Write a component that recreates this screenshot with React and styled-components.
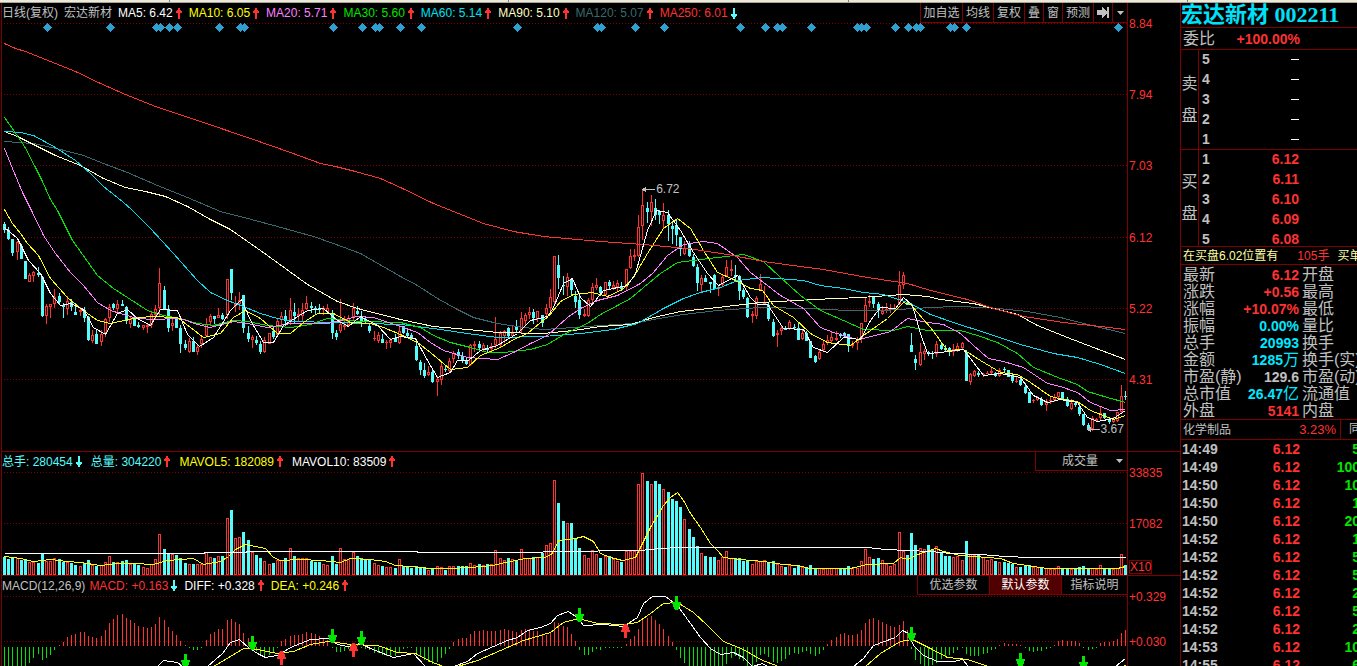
import React from 'react'
import styled, { createGlobalStyle } from 'styled-components'

const RED = '#ff3232'
const CYAN = '#54fcfc'
const LINE = '#800000'
const GRAY = '#c0c0c0'
const GREEN = '#00e600'
const YELLOW = '#ffff00'

// one entry per day: u(p) / d(own), then high, body top, body bottom, low
const candles = `
d222,224,230,233 d227,230,239,240 d239,239,253,256 u241,242,252,260 d244,246,259,259 d261,261,279,279 u273,275,282,282 u271,272,276,282
d267,273,275,277 d276,277,316,317 u304,306,316,324 u304,304,307,318 u289,297,304,308 d293,296,302,304 d303,305,307,318 u296,301,309,315
d299,302,307,311 d303,312,315,315 u307,310,312,316 d307,310,318,322 d316,317,340,341 u330,335,341,343 d330,334,344,344 u330,334,342,346
u318,319,333,337 u304,307,318,322 d303,304,308,310 u300,304,309,312 d300,304,306,306 d306,307,321,324 u316,319,324,328 d316,317,326,326
d322,325,327,328 u325,325,328,330 u323,325,327,333 u312,314,325,328 u305,309,315,320 u268,283,308,316 d286,290,309,310 d305,309,328,332
u318,323,326,331 d317,318,328,328 d325,328,344,353 d340,344,348,350 u338,341,352,353 d337,341,352,352 u344,347,352,355 u336,339,344,348
u318,324,336,336 u314,316,322,326 d316,316,319,324 u308,315,318,318 d313,315,319,320 u279,279,315,319 d269,269,293,300 u296,304,306,312
u292,300,304,310 d295,295,328,333 d326,333,339,342 u335,337,340,348 d336,340,343,345 d341,344,352,354 u337,340,352,353 u333,333,344,344
d327,331,337,339 u319,321,335,336 u312,316,320,325 d310,316,321,326 u298,310,320,325 d303,312,316,324 u308,314,316,321 u303,310,316,322
u296,303,309,310 d302,306,308,313 d306,308,310,314 d304,308,310,313 u306,308,310,315 u304,308,312,314 d310,313,333,339 d330,333,337,340
u299,324,331,333 u316,325,327,330 u315,318,325,326 u303,308,317,320 d306,311,314,315 d311,316,322,327 d317,319,322,323 d323,326,331,333
u331,338,339,341 u332,335,341,343 d334,339,343,343 u340,342,343,349 u338,340,343,348 d334,338,342,342 u325,331,343,344 d326,326,333,334
d329,333,336,337 d333,335,339,340 d340,346,360,361 d360,362,370,375 d363,370,376,378 u366,372,375,376 d368,372,382,383 u376,379,382,396
u363,366,380,385 d365,369,370,372 u358,361,371,372 u351,353,359,363 d349,352,356,359 d352,356,360,363 d357,360,364,365 u344,345,365,366
u341,344,346,352 d341,344,348,350 u343,345,349,351 d345,348,350,352 u343,346,349,351 u317,339,345,348 u331,333,345,347 u330,331,336,343
d327,328,336,337 u326,333,336,336 d320,326,330,333 u312,318,330,333 u313,315,321,326 u307,312,315,319 d309,312,318,324 u311,311,319,322
d315,315,323,327 u304,308,314,317 u289,297,308,313 u256,256,302,306 d255,265,278,289 d276,285,286,295 u273,277,287,296 d278,279,290,295
d291,296,302,308 d295,300,315,319 u309,314,316,317 u298,300,316,317 u283,287,300,303 u278,285,288,290 d286,287,293,296 u282,282,295,296
d280,282,286,290 u281,285,288,290 u280,283,287,291 d282,287,289,291 u269,269,287,290 u249,256,268,269 u249,255,257,261 u215,227,256,257
u189,205,226,240 d202,208,212,223 u195,202,212,226 d199,208,215,220 d210,211,215,224 u203,215,221,228 d210,215,224,241 d223,226,229,244
d220,225,235,246 d237,237,249,256 u241,248,254,255 d241,243,256,257 d254,257,266,267 d264,267,283,291 u275,278,285,292 d275,278,282,282
d282,282,284,293 d274,275,289,290 u286,287,289,296 u275,277,285,286 u260,267,276,276 u260,269,271,276 d265,275,277,280 d275,276,291,300
d288,290,297,299 d297,298,317,318 u311,314,316,323 u296,298,316,319 u274,284,290,291 u286,302,304,305 d303,305,319,321 d319,322,336,337
u330,333,335,347 u326,328,331,335 d326,328,330,330 u320,322,329,330 d324,327,328,330 d323,328,340,340 u330,333,339,340 d331,333,341,341
d341,341,358,358 d355,356,362,363 u349,352,359,360 u341,344,350,351 u335,340,343,345 u331,337,341,343 u331,338,340,341 d333,335,336,338
d332,333,336,337 d334,334,345,352 u341,344,346,348 u337,339,343,350 u323,323,339,343 u298,305,322,322 u295,301,303,307 d296,296,304,308
d302,304,310,318 u306,311,314,315 u303,309,310,313 u304,309,310,313 u304,308,309,311 u271,285,304,305 u272,275,285,289 d304,304,305,305
d333,345,352,352 d355,359,363,370 u343,352,365,366 u349,351,354,360 d351,352,354,356 d351,353,354,359 u341,344,354,357 d343,345,349,350
d345,348,350,351 d347,348,351,356 u344,349,352,356 u343,346,350,352 u342,343,348,350 d350,352,381,381 u373,374,382,385 u370,371,376,377
d371,373,375,377 u373,374,375,377 u371,373,374,374 u367,371,373,374 d372,373,376,377 u368,370,376,377 d367,369,370,372 d370,370,377,377
d373,375,381,383 u376,381,382,383 d377,380,385,386 d383,387,393,394 d392,392,403,403 u399,400,401,403 u396,397,400,401 d397,399,405,406
u399,401,405,411 u397,400,401,404 u394,397,400,402 u392,392,397,399 d392,392,399,400 d397,399,406,407 u399,403,409,410 d402,403,405,407
d402,407,414,416 d414,414,425,426 d423,425,429,430 u416,418,429,431 u418,419,421,422 u406,413,418,420 d413,413,418,419 d418,419,422,424
u417,419,422,423 u412,412,421,422 u385,396,412,414 d391,396,397,400
`
  .trim()
  .split(/\s+/)
  .map((c) => {
    const [high, top, bottom, low] = c.slice(1).split(',').map(Number)
    return { up: c[0] === 'u', high, top, bottom, low }
  })

const volumes = [
  18, 16, 18, 17, 15, 15, 13, 13, 12, 21, 14, 14, 17, 16, 13, 13, 12, 10, 9, 12, 15, 10, 9, 10, 13, 19, 13, 13, 14, 15, 11, 11, 10, 8, 7,
  11, 16, 41, 26, 21, 21, 20, 17, 12, 11, 11, 11, 11, 23, 18, 17, 19, 19, 57, 65, 37, 38, 43, 35, 23, 20, 17, 14, 11, 12, 15, 15, 17, 27,
  19, 17, 17, 17, 14, 13, 13, 11, 10, 19, 11, 27, 16, 16, 23, 19, 17, 16, 16, 12, 10, 9, 8, 8, 7, 16, 9, 8, 7, 9, 8, 7, 5, 7, 9, 8, 5, 9,
  9, 9, 9, 9, 12, 10, 11, 10, 11, 11, 25, 17, 15, 17, 16, 15, 26, 17, 17, 18, 18, 22, 30, 32, 95, 72, 54, 52, 52, 37, 27, 20, 17, 25, 21,
  17, 19, 19, 16, 14, 13, 24, 24, 24, 91, 102, 94, 91, 94, 91, 86, 83, 76, 74, 68, 56, 46, 38, 29, 22, 19, 18, 18, 15, 18, 24, 17, 17, 17,
  14, 14, 11, 14, 14, 15, 13, 14, 11, 9, 8, 10, 7, 9, 8, 7, 10, 7, 7, 6, 7, 7, 7, 7, 6, 9, 7, 7, 14, 26, 18, 16, 17, 15, 11, 9, 11, 43, 24,
  20, 42, 30, 27, 26, 30, 26, 29, 23, 19, 19, 18, 19, 15, 34, 21, 20, 20, 18, 15, 16, 14, 13, 13, 12, 11, 8, 8, 9, 10, 8, 8, 7, 7, 6, 6, 9,
  7, 7, 6, 6, 8, 9, 6, 7, 6, 10, 6, 6, 6, 7, 21, 10,
]

const macd = [
  -20, -20, -20, -20, -20, -19, -16, -11, -7, -13, -11, -8, -3, 1, 4, 9, 11, 12, 14, 14, 10, 9, 8, 10, 16, 23, 27, 31, 32, 28, 26, 23, 20,
  19, 18, 19, 22, 29, 26, 19, 15, 11, 5, 1, -1, -3, -3, -1, 6, 12, 14, 17, 17, 26, 27, 24, 22, 13, 8, -1, -4, -9, -9, -8, -5, -1, 5, 7, 10,
  11, 11, 12, 14, 13, 12, 10, 7, 6, -1, -5, -5, -4, -2, 1, 2, -1, -2, -3, -6, -6, -8, -9, -9, -9, -5, -2, -1, -1, -7, -10, -13, -15, -17,
  -15, -11, -7, -2, 4, 7, 8, 8, 12, 15, 15, 16, 15, 15, 15, 16, 17, 16, 15, 14, 16, 17, 17, 15, 15, 11, 11, 13, 24, 23, 20, 19, 12, 5, -3,
  -8, -8, -5, -2, -3, -1, -1, -1, -1, -1, 2, 7, 10, 17, 27, 28, 30, 26, 22, 17, 10, 4, -3, -11, -16, -20, -20, -20, -20, -20, -20, -20, -20,
  -20, -17, -11, -9, -12, -14, -19, -20, -15, -8, -7, -10, -15, -16, -14, -12, -8, -6, -7, -5, -4, -7, -9, -7, -3, 2, 6, 9, 12, 13, 11, 11,
  12, 16, 23, 27, 28, 26, 24, 22, 20, 19, 21, 25, 16, -2, -13, -17, -19, -20, -18, -16, -12, -10, -8, -6, -3, -1, -7, -9, -9, -9, -7, -6,
  -3, -2, 1, 3, 2, 2, 2, 1, -1, -4, -5, -4, -4, -2, -1, 1, 5, 6, 5, 5, 5, 3, -1, -3, -2, -1, 3, 4, 4, 5, 7, 13, 16,
]

const priceLines = [
  {
    color: '#3a6a6e',
    points:
      '4,141 33,143 60,149 83,155 103,163 127,172 157,185 187,197 220,211 251,219 277,226 313,236 333,243 360,253 400,276 417,285 437,298 457,309 473,317 497,323 523,327 543,329 573,327 600,325 633,323 653,319 683,314 717,310 760,307 810,308 847,310 883,310 913,308 953,306 987,307 1027,311 1060,317 1087,324 1125,333',
  },
  {
    color: '#ffffc0',
    points:
      '4,131 17,136 33,144 55,155 80,165 103,178 125,187 145,191 165,196 187,206 210,219 230,229 267,255 307,284 337,301 357,308 400,319 433,326 467,329 497,332 543,333 573,330 600,326 630,324 653,317 680,311 717,307 760,302 813,299 860,297 903,294 927,296 940,299 973,303 993,308 1017,314 1037,325 1067,337 1093,347 1125,359',
  },
  {
    color: '#00e0f0',
    points:
      '4,131 20,132 33,135 55,147 75,160 90,173 103,186 122,201 132,210 150,228 173,253 197,280 210,292 227,300 243,306 260,313 277,318 293,321 333,322 400,324 433,328 467,333 497,337 543,336 580,333 613,329 637,323 663,308 683,298 700,292 720,287 737,280 763,277 803,280 820,285 843,288 863,292 883,294 910,303 930,314 953,322 987,333 1020,344 1053,353 1077,357 1100,364 1125,373',
  },
  {
    color: GREEN,
    points:
      '4,117 14,131 24,146 35,167 42,181 50,199 57,210 72,240 97,275 113,288 127,297 147,310 163,315 180,318 197,323 213,325 233,320 247,321 267,325 290,327 310,324 327,318 347,320 363,321 400,322 420,327 433,335 450,342 470,347 487,352 503,352 530,349 547,344 567,332 587,323 600,314 617,305 630,298 643,287 660,273 677,262 700,259 717,257 743,254 763,261 780,277 800,295 820,310 843,320 863,329 893,330 907,326 927,330 960,330 977,335 997,342 1017,353 1033,367 1060,378 1077,384 1087,391 1107,397 1125,402',
  },
  {
    color: '#ff80ff',
    points:
      '4,148 12,168 22,192 31,210 43,235 55,253 70,272 83,285 97,302 110,310 133,317 150,319 180,318 197,324 210,327 233,321 247,323 267,327 290,323 327,323 357,316 373,317 400,326 417,332 430,342 443,350 467,357 497,359 513,352 530,343 547,335 567,317 580,308 597,300 617,295 640,283 653,272 667,255 683,244 703,241 717,243 737,257 750,272 763,282 780,295 803,308 820,327 833,332 857,339 867,337 890,331 907,318 927,322 943,324 960,333 973,345 988,358 1003,361 1023,367 1047,383 1060,386 1077,392 1090,402 1110,410 1125,409',
  },
  {
    color: YELLOW,
    points:
      '4,209 12,223 20,233 27,243 38,255 50,278 67,297 80,308 97,320 110,323 133,318 150,316 177,317 190,327 203,337 220,333 233,317 245,310 260,318 277,333 290,333 303,322 317,313 333,313 350,322 370,323 383,327 400,334 417,342 430,352 450,369 467,367 480,355 500,347 513,339 527,333 540,322 548,316 560,301 573,294 592,292 607,296 622,289 633,277 647,253 663,228 677,218 690,228 703,250 717,272 733,279 750,288 762,290 773,305 793,317 810,333 827,342 850,345 863,335 887,318 903,302 910,304 930,327 947,350 963,349 980,360 1000,372 1017,374 1030,382 1050,396 1063,399 1077,401 1090,410 1113,419 1125,415',
  },
  {
    color: RED,
    points:
      '4,43 15,48 25,51 50,61 75,71 100,83 125,94 155,106 200,121 250,138 290,152 320,163 335,166 355,171 380,178 400,187 433,203 483,223 513,231 543,236 600,241 643,244 687,248 727,254 763,261 800,266 823,269 867,277 907,283 930,290 967,299 993,308 1023,316 1063,322 1100,326 1125,329',
  },
  {
    color: '#fff',
    points:
      '4,227 17,238 28,260 40,273 50,293 60,305 70,303 83,309 93,327 105,334 117,313 127,309 137,318 150,325 160,309 177,310 187,334 199,346 213,337 230,310 241,299 250,320 263,342 273,342 283,325 307,310 323,308 337,320 348,326 360,316 377,325 390,339 400,336 415,338 427,360 437,377 450,372 457,360 468,360 480,350 497,345 517,333 530,320 547,316 553,307 563,283 572,278 580,297 590,306 603,290 627,285 635,273 647,230 656,210 667,212 680,230 693,252 707,273 718,285 737,275 750,297 757,304 767,304 783,328 803,329 813,347 827,352 843,337 860,339 870,320 880,307 895,308 903,297 912,305 920,333 927,353 940,352 963,349 983,375 1000,373 1020,377 1033,395 1047,402 1060,399 1077,402 1087,417 1097,421 1113,418 1125,410',
  },
]

const volumeLines = [
  {
    color: YELLOW,
    points:
      '4,556 20,558 33,561 50,559 67,561 80,562 100,565 117,563 133,563 153,564 167,560 193,558 203,564 220,561 228,556 235,549 245,544 255,546 265,548 273,557 280,560 300,559 320,560 340,562 350,558 370,559 385,561 395,565 410,566 430,568 450,568 470,567 492,565 505,562 525,558 545,557 552,553 558,540 575,538 583,536 593,541 600,553 610,557 622,560 635,557 640,547 650,527 663,505 670,497 677,492 683,500 690,513 700,527 710,543 717,550 723,557 740,559 763,561 783,564 797,565 810,568 850,568 867,564 893,563 900,557 907,559 920,553 935,548 943,551 960,555 987,557 1000,558 1013,563 1033,566 1047,568 1117,568 1125,566',
  },
  {
    color: '#fff',
    points:
      '4,553 203,553 205,552 245,552 247,551 415,551 419,552 540,552 545,551 595,551 600,550 640,550 660,548 680,547 867,547 885,549 930,551 950,553 980,554 1005,556 1030,557 1125,557',
  },
]

const macdLines = [
  { color: '#fff', points: '157,666 163,660 177,662 182,666' },
  {
    color: '#fff',
    points:
      '207,666 222,653 230,642 239,639 248,647 257,653 265,657 277,655 290,647 310,639 328,638 337,644 347,646 360,643 370,648 393,657 413,653 425,666',
  },
  {
    color: '#fff',
    points:
      '453,666 467,661 477,653 493,646 507,640 517,637 527,630 540,627 550,623 557,615 568,611 578,618 583,625 603,624 623,626 637,617 643,603 652,596 665,596 677,605 690,623 700,637 710,648 720,654 733,652 743,657 752,666 762,663 767,666',
  },
  {
    color: '#fff',
    points: '853,666 863,658 873,645 895,637 902,630 908,633 913,645 923,655 937,661 953,661 962,659 968,666',
  },
  { color: '#fff', points: '1115,666 1125,658' },
  {
    color: YELLOW,
    points: '213,666 230,656 243,648 257,649 277,653 293,651 310,644 328,641 350,644 377,645 397,652 415,653 430,661 443,666',
  },
  {
    color: YELLOW,
    points:
      '457,666 477,660 500,650 523,640 550,632 563,622 578,618 597,623 623,624 637,622 650,613 663,603 677,602 693,612 707,625 723,641 743,649 760,659 778,666',
  },
  { color: YELLOW, points: '865,666 880,653 900,641 912,639 930,648 947,657 967,659 988,666' },
  { color: YELLOW, points: '1123,666 1126,664' },
]

const sellSignals = [[185, 654], [252, 636], [332, 629], [361, 631], [579, 608], [676, 596], [911, 627], [1020, 653], [1083, 656]]
const buySignals = [[281, 651], [353, 643], [625, 624]]

const newsDays = [
  47, 110, 156, 160, 169, 177, 219, 240, 244, 333, 362, 375, 379, 400, 421, 517, 597, 601, 635, 664, 740, 765, 777, 782, 811, 857, 861, 866,
  895, 908, 916, 920, 950, 954, 966, 1118,
]

const maItems = [
  { text: 'MA5: 6.42', color: '#fff', up: true },
  { text: 'MA10: 6.05', color: YELLOW, up: true },
  { text: 'MA20: 5.71', color: '#ff80ff', up: true },
  { text: 'MA30: 5.60', color: GREEN, up: true },
  { text: 'MA60: 5.14', color: '#00e0f0', up: true },
  { text: 'MA90: 5.10', color: '#ffffc0', up: true },
  { text: 'MA120: 5.07', color: '#3a6a6e', up: true },
  { text: 'MA250: 6.01', color: RED, up: false },
]

const volItems = [
  { text: '总手: 280454', color: CYAN, up: false },
  { text: '总量: 304220', color: CYAN, up: true },
  { text: 'MAVOL5: 182089', color: YELLOW, up: true },
  { text: 'MAVOL10: 83509', color: '#fff', up: true },
]

const macdItems = [
  { text: 'MACD: +0.163', color: RED, up: false },
  { text: 'DIFF: +0.328', color: '#fff', up: true },
  { text: 'DEA: +0.246', color: YELLOW, up: true },
]

const asks = ['5', '4', '3', '2', '1']
const bids = [['1', '6.12'], ['2', '6.11'], ['3', '6.10'], ['4', '6.09'], ['5', '6.08']]

const stats = [
  ['最新', '6.12', '', RED, '开盘'],
  ['涨跌', '+0.56', '', RED, '最高'],
  ['涨幅', '+10.07%', '', RED, '最低'],
  ['振幅', '0.00%', '', '#00e8ff', '量比'],
  ['总手', '20993', '', '#00e8ff', '换手'],
  ['金额', '1285', '万', '#00e8ff', '换手(实)'],
  ['市盈(静)', '129.6', '', GRAY, '市盈(动)'],
  ['总市值', '26.47', '亿', '#00e8ff', '流通值'],
  ['外盘', '5141', '', RED, '内盘'],
]

const ticks = [
  ['14:49', '5'], ['14:49', '100'], ['14:50', '10'], ['14:50', '1'], ['14:50', '20'], ['14:52', '1'], ['14:52', '5'],
  ['14:52', '5'], ['14:52', '2'], ['14:52', '5'], ['14:52', '2'], ['14:53', '10'], ['14:55', '6'],
]

const dayX = (i) => Math.floor(4.4 + 4.2 * i)

function Grid({ rows }) {
  return rows.map((y) => <line key={y} x1="4" x2="1127" y1={y + 0.5} y2={y + 0.5} stroke={LINE} strokeDasharray="1 2" />)
}

function Lines({ items }) {
  return items.map((l, i) => (
    <polyline key={i} points={l.points} fill="none" stroke={l.color} strokeWidth="1" transform="translate(0.5 0.5)" />
  ))
}

function Body({ x, top, bottom, up }) {
  const h = Math.max(bottom - top, 1)
  if (!up || h < 3) return <rect x={x - 1} y={top} width="3" height={h} fill={up ? RED : CYAN} />
  return <rect x={x - 0.5} y={top + 0.5} width="2" height={h - 1} fill="#000" stroke={RED} />
}

function Trend({ up }) {
  return (
    <TrendIcon viewBox="0 0 7 11" aria-hidden="true">
      {up ? (
        <path d="M3 0h2v2h1v1h1v2H5v6H3V5H1V3h1V2h1z" fill={RED} />
      ) : (
        <path d="M3 0h2v6h2v2H6v1H5v2H3V9H2V8H1V6h2z" fill={CYAN} />
      )}
    </TrendIcon>
  )
}

function Legend({ items, gap = 7 }) {
  return items.map((m) => (
    <LegendItem key={m.text} $color={m.color} $gap={gap}>
      {m.text}
      <Trend up={m.up} />
    </LegendItem>
  ))
}

function PriceChart() {
  return (
    <Plot $height={428} viewBox="2 23 1125 428" preserveAspectRatio="none" shapeRendering="crispEdges">
      <Grid rows={[23, 94, 165, 237, 308, 379]} />
      {newsDays.map((x) => (
        <path key={x} d={`M${x} 23h1v1h1v1h1v1h1v1h1v1h-1v1h-1v1h-1v1h-1v1h-1v-1h-1v-1h-1v-1h-1v-1h-1v-1h1v-1h1v-1h1v-1h1z`} fill="#2f9fd0" />
      ))}
      {candles.map((c, i) => {
        const x = dayX(i)
        return (
          <g key={i}>
            <rect x={x} y={c.high} width="1" height={c.low - c.high} fill={c.up ? RED : CYAN} />
            <Body x={x} top={c.top} bottom={c.bottom} up={c.up} />
          </g>
        )
      })}
      <Lines items={priceLines} />
    </Plot>
  )
}

function VolumeChart() {
  return (
    <Plot $height={104} viewBox="2 471 1125 104" preserveAspectRatio="none" shapeRendering="crispEdges">
      <Grid rows={[472, 523]} />
      {volumes.map((v, i) => (
        <Body key={i} x={dayX(i)} top={575 - v} bottom={575} up={candles[i].up} />
      ))}
      <Lines items={volumeLines} />
    </Plot>
  )
}

function MacdChart() {
  return (
    <Plot $height={71} viewBox="2 595 1125 71" preserveAspectRatio="none" shapeRendering="crispEdges">
      <Grid rows={[596, 641]} />
      {macd.map((v, i) => (
        <rect key={i} x={dayX(i)} y={v > 0 ? 646 - v : 647} width="1" height={Math.abs(v)} fill={v > 0 ? RED : GREEN} />
      ))}
      <Lines items={macdLines} />
      {sellSignals.map(([x, y]) => (
        <path key={x} d={`M${x - 1} ${y}h3v6h3v2h-1v3h-1v2h-1v1h-3v-1h-1v-2h-1v-3h-1v-2h3z`} fill={GREEN} />
      ))}
      {buySignals.map(([x, y]) => (
        <path key={x} d={`M${x - 1} ${y + 14}h3v-6h3v-2h-1v-3h-1v-2h-1v-1h-3v1h-1v2h-1v3h-1v2h3z`} fill={RED} />
      ))}
    </Plot>
  )
}

function Pointer() {
  return (
    <svg width="13" height="7" viewBox="0 0 13 7" shapeRendering="crispEdges" aria-hidden="true">
      <path d="M0 3h1v-1h2v-1h1v2h9v1H4v2H3v-1H1v-1H0z" fill={GRAY} />
    </svg>
  )
}

function App() {
  return (
    <>
      <GlobalStyle />
      <Page>
        <Strip>
          <i /><i /><i /><i />
        </Strip>
        <Workspace>
          <Charts>
            <Panel $line>
              <Main>
                <Header $height={20}>
                  <Caption>日线(复权)</Caption>
                  <Caption>宏达新材</Caption>
                  <Legend items={maItems} />
                  <Tools>
                    <Tool $width={42}>加自选</Tool>
                    <Tool $width={31}>均线</Tool>
                    <Tool $width={31}>复权</Tool>
                    <Tool $width={19}>叠</Tool>
                    <Tool $width={19}>窗</Tool>
                    <Tool $width={31}>预测</Tool>
                    <Tool $width={19} aria-label="last">
                      <svg width="12" height="11" viewBox="0 0 12 11" shapeRendering="crispEdges">
                        <path d="M0 3h5V0h1v1h1v1h1v1h1v1h1V0h2v11h-2V7H9v1H8v1H7v1H6v1H5V8H0z" fill={GRAY} />
                      </svg>
                    </Tool>
                    <Tool $width={15} aria-label="more">
                      <Caret viewBox="0 0 7 4"><path d="M0 0h7L3.500 4z" fill={GRAY} /></Caret>
                    </Tool>
                  </Tools>
                </Header>
                <PriceArea>
                  <PriceChart />
                  <Mark $left="56.900%" $top={158}><Pointer />6.72</Mark>
                  <Mark $left="96.400%" $top={398}><Pointer />3.67</Mark>
                </PriceArea>
              </Main>
              <Axis $spread>
                <span>8.84</span>
                <span>7.94</span>
                <span>7.03</span>
                <span>6.12</span>
                <span>5.22</span>
                <span>4.31</span>
              </Axis>
            </Panel>
            <Panel $line>
              <Main>
                <Header $height={19}>
                  <Legend items={volItems} gap={9} />
                  <Tools>
                    <Picker>
                      <select aria-label="indicator" defaultValue="vol">
                        <option value="vol">成交量</option>
                      </select>
                      <Caret viewBox="0 0 7 4"><path d="M0 0h7L3.500 4z" fill={GRAY} /></Caret>
                    </Picker>
                  </Tools>
                </Header>
                <VolumeChart />
              </Main>
              <Axis $gap={35}>
                <span>33835</span>
                <span>17082</span>
                <Unit>X10</Unit>
              </Axis>
            </Panel>
            <Panel>
              <Main>
                <Header $height={19}>
                  <Param>MACD(12,26,9)</Param>
                  <Legend items={macdItems} />
                  <Tools>
                    <Tool $width={72}>优选参数</Tool>
                    <Tool $width={72} $active>默认参数</Tool>
                    <Tool $width={66}>指标说明</Tool>
                  </Tools>
                </Header>
                <MacdChart />
              </Main>
              <Axis $gap={29}>
                <span>+0.329</span>
                <span>+0.030</span>
              </Axis>
            </Panel>
          </Charts>
          <Side>
            <Title>宏达新材 002211</Title>
            <Ratio>
              <span>委比</span>
              <Num $color={RED}>+100.00%</Num>
            </Ratio>
            <Book>
              <BookSide><span>卖</span><span>盘</span></BookSide>
              <Levels $height={100}>
                {asks.map((n) => (
                  <Level key={n}>
                    <Num $color={GRAY}>{n}</Num>
                    <Dash />
                  </Level>
                ))}
              </Levels>
            </Book>
            <Book>
              <BookSide><span>买</span><span>盘</span></BookSide>
              <Levels $height={97}>
                {bids.map(([n, price]) => (
                  <Level key={n}>
                    <Num $color={GRAY}>{n}</Num>
                    <Num $color={RED}>{price}</Num>
                  </Level>
                ))}
              </Levels>
            </Book>
            <Notice>
              <span>在买盘6.02位置有</span>
              <b>105手</b>
              <span>买单</span>
            </Notice>
            <Stats>
              <tbody>
                {stats.map(([label, value, unit, color, next]) => (
                  <tr key={label}>
                    <th scope="row">{label}</th>
                    <td><Num $color={color}>{value}<em>{unit}</em></Num></td>
                    <th scope="row">{next}</th>
                  </tr>
                ))}
              </tbody>
            </Stats>
            <Industry>
              <span>化学制品</span>
              <b>3.23%</b>
              <i>同</i>
            </Industry>
            <Ticks>
              <tbody>
                {ticks.map(([time, vol], i) => (
                  <tr key={i}>
                    <td><Num $color={GRAY}>{time}</Num></td>
                    <td><Num $color={RED}>6.12</Num></td>
                    <td><Num $color={GREEN}>{vol}</Num></td>
                  </tr>
                ))}
              </tbody>
            </Ticks>
          </Side>
        </Workspace>
      </Page>
    </>
  )
}

export default App

const GlobalStyle = createGlobalStyle`
  *{
    box-sizing:border-box;
  }
  body{
    margin:0;
    background:#000;
    color:${GRAY};
    font-family:'Liberation Sans','Noto Sans CJK SC',sans-serif;
    font-size:12px;
    line-height:16px;
    overflow:hidden;
  }
  button,select{
    font:inherit;
    color:inherit;
  }
`

const Page = styled.div`
  display:flex;
  flex-direction:column;
  height:100vh;
  overflow:hidden;
`

const Strip = styled.div`
  display:flex;
  justify-content:space-around;
  flex:none;
  height:3px;
  background:#ece9d8;
  border-bottom:1px solid #a8a698;

  i{
    width:1px;
    background:#808078;
  }
`

const Workspace = styled.div`
  display:flex;
  flex:1;
  min-height:0;
`

const Charts = styled.div`
  flex:1;
  min-width:0;
  margin-left:1px;
  border-left:1px solid ${LINE};
`

const Panel = styled.section`
  display:flex;
  border-bottom:${(p) => (p.$line ? `1px solid ${LINE}` : 'none')};
`

const Main = styled.div`
  flex:1;
  min-width:0;
`

const Header = styled.div`
  display:flex;
  align-items:center;
  height:${(p) => p.$height}px;
  white-space:nowrap;
`

const Caption = styled.span`
  margin-right:6px;
`

const Param = styled.span`
  margin-right:4px;
`

const LegendItem = styled.span`
  display:flex;
  align-items:center;
  gap:2px;
  margin-right:${(p) => p.$gap}px;
  color:${(p) => p.$color};
`

const TrendIcon = styled.svg`
  width:7px;
  height:11px;
  shape-rendering:crispEdges;
`

const Tools = styled.div`
  display:flex;
  align-self:stretch;
  margin-left:auto;
`

const Tool = styled.button`
  display:flex;
  align-items:center;
  justify-content:center;
  width:${(p) => p.$width}px;
  padding:0;
  border:solid ${LINE};
  border-width:0 0 1px 1px;
  background:${(p) => (p.$active ? '#500000' : '#000')};
  color:${(p) => (p.$active ? '#fff' : GRAY)};
`

const Caret = styled.svg`
  width:7px;
  height:4px;
`

const Picker = styled.label`
  display:flex;
  align-items:center;
  width:92px;
  padding:0 4px 0 8px;
  border:solid ${LINE};
  border-width:0 0 1px 1px;
  background:#000;

  select{
    flex:1;
    appearance:none;
    border:0;
    padding:0;
    background:none;
    text-align:center;
    text-align-last:center;
  }
`

const PriceArea = styled.div`
  position:relative;
`

const Plot = styled.svg`
  display:block;
  width:100%;
  height:${(p) => p.$height}px;
`

const Mark = styled.span`
  position:absolute;
  left:${(p) => p.$left};
  top:${(p) => p.$top}px;
  display:flex;
  align-items:center;
  gap:1px;
`

const Axis = styled.div`
  display:flex;
  flex-direction:column;
  align-items:flex-start;
  justify-content:${(p) => (p.$spread ? 'space-between' : 'flex-start')};
  gap:${(p) => p.$gap || 0}px;
  width:53px;
  padding:13px 0 ${(p) => (p.$spread ? 63 : 0)}px 1px;
  border-left:1px solid ${LINE};
  color:${RED};
`

const Unit = styled.span`
  margin-top:-7px;
  border:1px solid ${LINE};
  line-height:12px;
`

const Side = styled.aside`
  width:177px;
  border-left:1px solid ${LINE};
  overflow:hidden;
  white-space:nowrap;
  font-size:16px;
`

const Title = styled.h1`
  margin:0;
  height:25px;
  border-bottom:1px solid ${LINE};
  color:#00e0f8;
  font:bold 22px/24px 'Liberation Serif','Noto Sans CJK SC',serif;
`

const Num = styled.span`
  color:${(p) => p.$color};
  font-size:14px;
  font-weight:bold;
  line-height:14px;

  em{
    font-style:normal;
    font-weight:normal;
    font-size:16px;
  }
`

const Ratio = styled.div`
  display:flex;
  align-items:center;
  justify-content:space-between;
  height:22px;
  padding:0 57px 0 2px;
  border-bottom:1px solid ${LINE};
`

const Book = styled.div`
  display:flex;
  border-bottom:1px solid ${LINE};
`

const BookSide = styled.div`
  display:flex;
  flex-direction:column;
  align-items:center;
  justify-content:center;
  gap:16px;
  width:18px;
  border-right:1px solid ${LINE};
`

const Levels = styled.div`
  flex:1;
  height:${(p) => p.$height}px;
  margin-top:-1px;
`

const Level = styled.div`
  display:flex;
  align-items:center;
  justify-content:space-between;
  height:20px;
  padding:0 58px 0 3px;
`

const Dash = styled.i`
  width:8px;
  height:1px;
  background:#fff;
`

const Notice = styled.div`
  display:flex;
  align-items:center;
  height:18px;
  padding-left:2px;
  border-bottom:1px solid ${LINE};
  color:#ffffa0;
  font-size:12px;

  b{
    margin:0 8px 0 19px;
    color:${RED};
    font-weight:normal;
  }
`

const Stats = styled.table`
  width:176px;
  table-layout:fixed;
  border-spacing:0;
  padding-top:1px;
  border-bottom:1px solid ${LINE};

  th,td{
    height:17px;
    padding:0 0 0 2px;
    font-weight:normal;
    line-height:14px;
    text-align:left;
    vertical-align:middle;
  }
  th:first-child{
    width:58px;
  }
  td{
    width:60px;
    padding:0;
    text-align:right;
  }
  th:last-child{
    padding-left:3px;
  }
`

const Industry = styled.div`
  display:flex;
  align-items:center;
  height:20px;
  padding-left:2px;
  border-bottom:1px solid ${LINE};
  font-size:12px;

  b{
    margin-left:auto;
    color:${RED};
    font-size:13px;
    font-weight:normal;
  }
  i{
    align-self:stretch;
    width:17px;
    margin-left:4px;
    padding-left:8px;
    border-left:1px solid ${LINE};
    font-style:normal;
    line-height:19px;
  }
`

const Ticks = styled.table`
  width:179px;
  table-layout:fixed;
  border-spacing:0;

  td{
    height:18px;
    padding:0;
    line-height:16px;
    text-align:right;
    vertical-align:middle;
  }
  td:first-child{
    width:52px;
    padding-left:1px;
    text-align:left;
  }
  td:nth-child(2){
    width:67px;
  }
`
